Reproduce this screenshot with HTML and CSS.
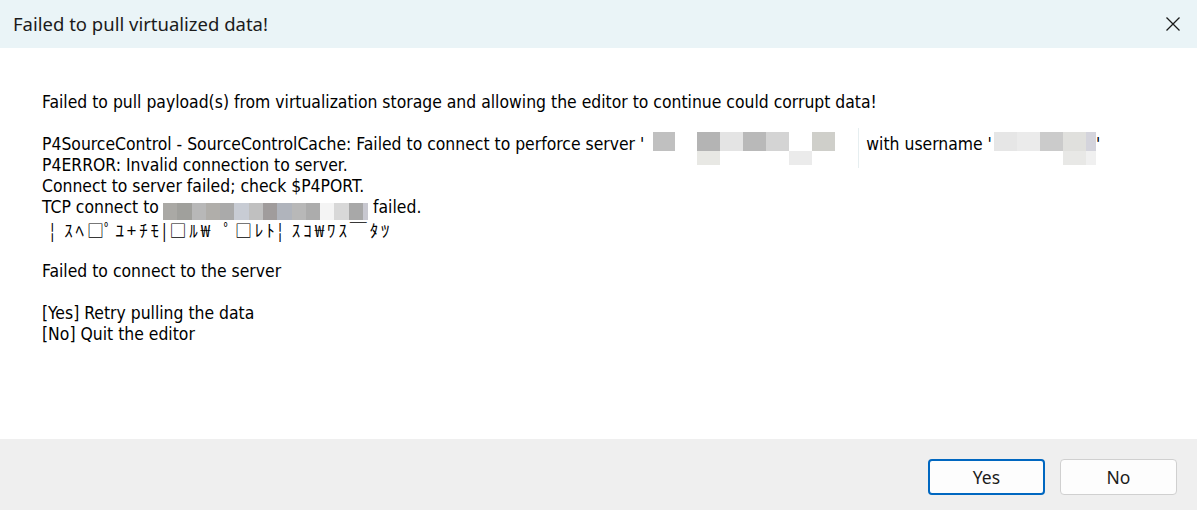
FILE: index.html
```html
<!DOCTYPE html>
<html lang="en">
<head>
<meta charset="utf-8">
<title>Failed to pull virtualized data!</title>
<link rel="stylesheet" href="styles.css">
</head>
<body>
<div class="dialog">
  <header class="titlebar">
    <span class="title">Failed to pull virtualized data!</span>
    <span class="close" aria-label="Close">
      <svg width="16" height="16" viewBox="0 0 16 16"><path d="M1.5 1.5 L14.5 14.5 M14.5 1.5 L1.5 14.5" stroke="#1a1a1a" stroke-width="1.3" fill="none"/></svg>
    </span>
  </header>
  <main class="content">
    <div class="line">Failed to pull payload(s) from virtualization storage and allowing the editor to continue could corrupt data!</div>
    <div class="line blank"></div>
    <div class="line">P4SourceControl - SourceControlCache: Failed to connect to perforce server '<span class="redact r1"><i style="background:#c0c0c0"></i></span><span class="gap g1"></span><span class="redact r2"><i class="cell" style="background:#b4b4b4"><b style="background:#e8e8e4"></b></i><i class="cell" style="background:#e4e4e4"></i><i class="cell" style="background:#b9b9b9"></i><i class="cell" style="background:#d4d4d4"></i><i class="cell" style="background:#ffffff"><b style="background:#ebebeb"></b></i><i class="cell" style="background:#cfcfca"></i></span><span class="gap g2"></span><span class="sep"></span>with username '<span class="redact r3"><i class="cell" style="background:#e6e6e6"></i><i class="cell" style="background:#ebebeb"></i><i class="cell" style="background:#cbcbcb"></i><i class="cell" style="background:#e0e0dd"><b style="background:#e8e8e6"></b></i><i class="cell narrow" style="background:#d4d4dc"><b style="background:#f0f0f0"></b></i></span>'</div>
    <div class="line">P4ERROR: Invalid connection to server.</div>
    <div class="line">Connect to server failed; check $P4PORT.</div>
    <div class="line">TCP connect to<span class="redact r4"><i style="background:#aaa9a5"></i><i style="background:#a0a09c"></i><i style="background:#b8b8b8"></i><i style="background:#b0aeaa"></i><i style="background:#aaaaaa"></i><i style="background:#c8ccd4"></i><i style="background:#c0c0c0"></i><i style="background:#a09c9c"></i><i style="background:#b0b4bc"></i><i style="background:#b8b8b8"></i><i style="background:#acacac"></i><i style="background:#f4f4f4"></i><i style="background:#d8d8d8"></i><i style="background:#a8a8a8"></i><i class="tiny" style="background:#c8c8d0"></i></span>&nbsp;failed.</div>
    <div class="line garbled">&#166; ｽﾍ□ﾟﾕ+ﾁﾓ|□ﾙ₩&nbsp; ﾟ□ﾚﾄ&#166; ｽｺ₩ﾜｽ￣ﾀﾂ</div>
    <div class="line blank"></div>
    <div class="line">Failed to connect to the server</div>
    <div class="line blank"></div>
    <div class="line">[Yes] Retry pulling the data</div>
    <div class="line">[No] Quit the editor</div>
  </main>
  <footer class="footer">
    <button class="btn primary">Yes</button>
    <button class="btn">No</button>
  </footer>
</div>
</body>
</html>
```

FILE: styles.css
```css
html, body {
  margin: 0;
  padding: 0;
  background: #ffffff;
}

.dialog {
  width: 1197px;
  height: 510px;
  display: flex;
  flex-direction: column;
  background: #ffffff;
  overflow: hidden;
}

.titlebar {
  height: 48px;
  flex: none;
  background: #eaf4f7;
  display: flex;
  align-items: center;
  justify-content: space-between;
  padding: 0 16px 0 13px;
}

.title {
  font-family: "Noto Sans", "Open Sans", sans-serif;
  font-size: 18.5px;
  color: #1b1b1b;
  padding-bottom: 2px;
}

.close {
  display: flex;
  width: 16px;
  height: 16px;
}

.content {
  flex: 1;
  padding: 44px 0 0 42px;
  font-family: "DejaVu Sans Condensed", "DejaVu Sans", sans-serif;
  font-size: 17.4px;
  color: #000000;
}

.line {
  height: 21.1px;
  line-height: 21.1px;
  white-space: nowrap;
  display: flex;
  align-items: center;
}

.redact {
  display: inline-flex;
  align-self: flex-start;
  margin-top: -2px;
}

.redact i {
  display: block;
  position: relative;
  flex: none;
}

.r1 { margin-left: 9px; }
.r1 i { width: 22px; height: 19px; }
.r2 .cell, .r3 .cell { width: 23px; height: 19px; }
.r3 .cell.narrow { width: 10px; }
.r3 { margin-left: 2px; }
.cell b {
  position: absolute;
  left: 0;
  top: 19px;
  width: 100%;
  height: 14px;
}

.gap { display: inline-block; flex: none; }
.g1 { width: 22px; }
.g2 { width: 23px; }

.sep {
  display: inline-block;
  flex: none;
  width: 1px;
  height: 40px;
  align-self: flex-start;
  margin-top: -6px;
  background: #e6eef0;
  margin-right: 7px;
}

.r4 {
  margin-top: 6px;
  margin-left: 4px;
}
.r4 i { width: 14.3px; height: 17px; }
.r4 i.tiny { width: 5px; }

.garbled {
  font-family: "Noto Sans CJK JP", "DejaVu Sans", sans-serif;
  font-size: 17px;
  letter-spacing: 2.9px;
  padding-left: 8px;
}

.footer {
  height: 71px;
  flex: none;
  background: #efefef;
  display: flex;
  justify-content: flex-end;
  align-items: flex-start;
  gap: 15px;
  padding: 20px 20px 0 0;
  box-sizing: border-box;
}

.btn {
  width: 117px;
  height: 36px;
  background: #fdfdfd;
  border: 1px solid #d0d0d0;
  border-radius: 4px;
  font-family: "Noto Sans", "Open Sans", sans-serif;
  font-size: 17.5px;
  color: #1b1b1b;
  padding: 0;
}

.btn.primary {
  border: 2px solid #0067c0;
}
```
